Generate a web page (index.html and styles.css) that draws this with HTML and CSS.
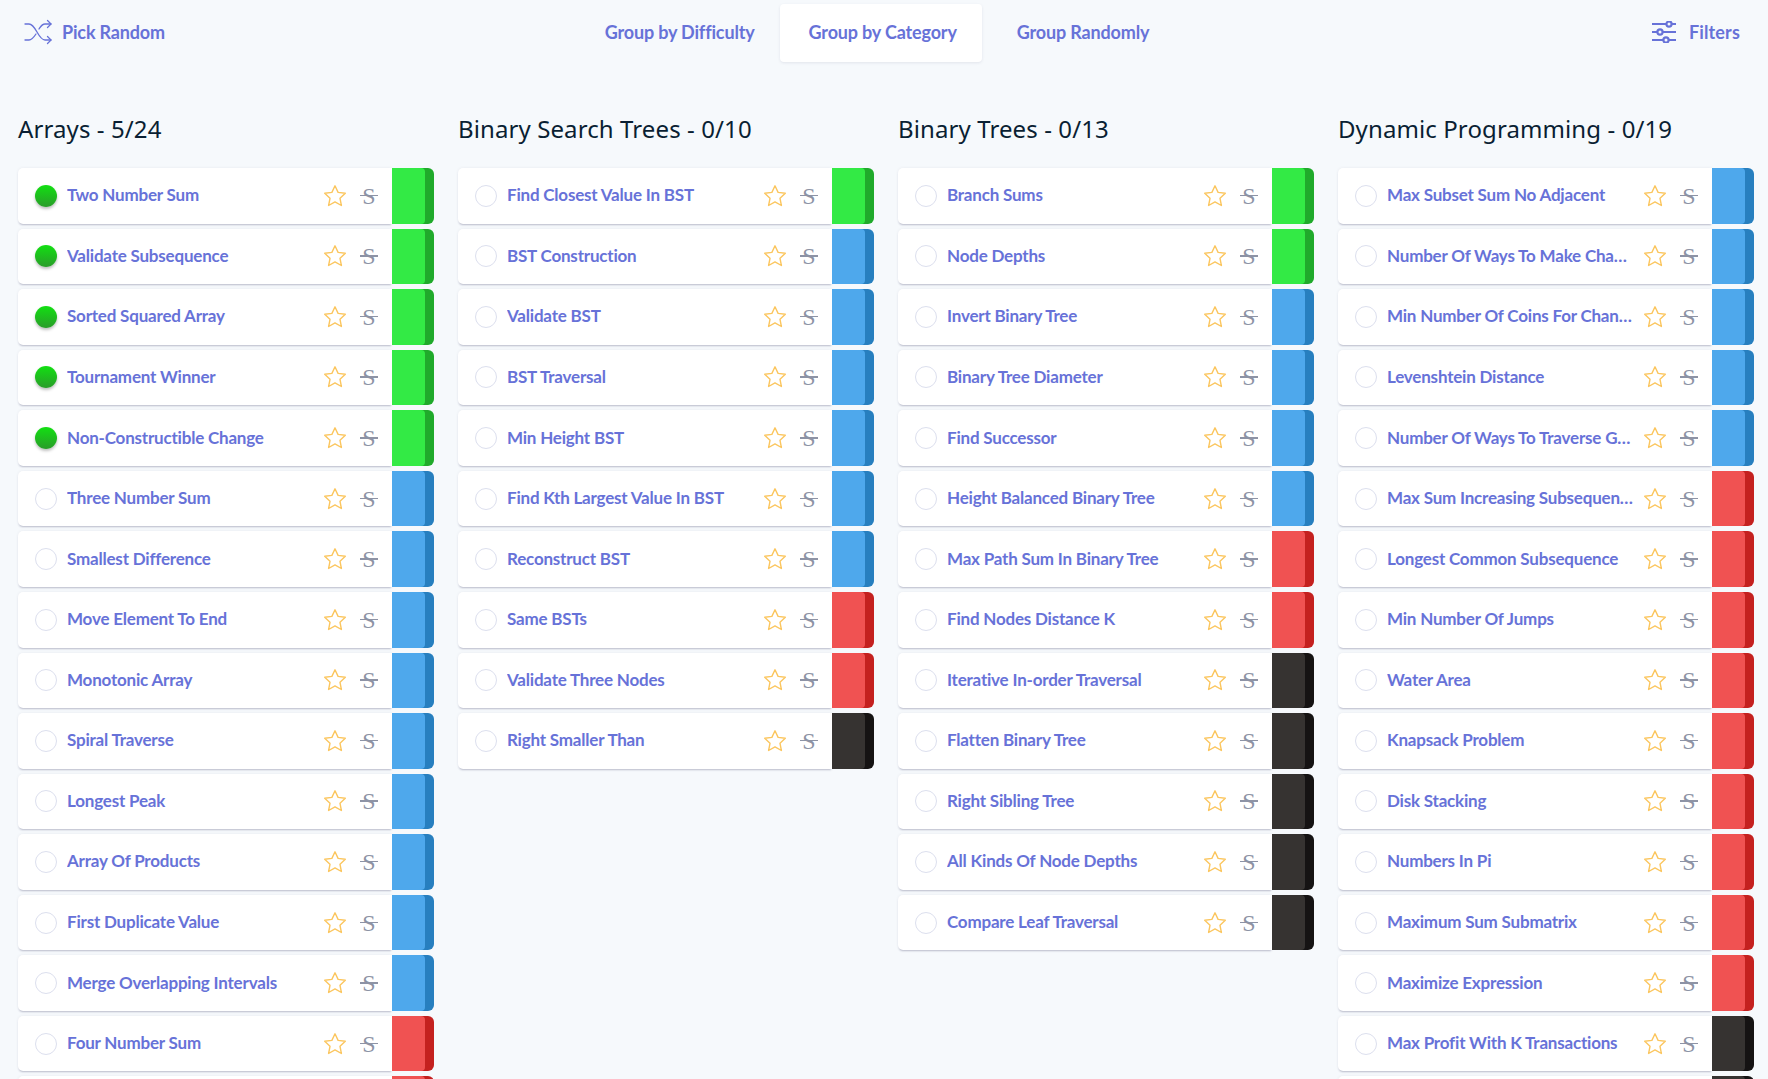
FILE: index.html
```html
<!DOCTYPE html>
<html lang="en">
<head>
    <meta charset="UTF-8">
    <meta name="viewport" content="width=device-width, initial-scale=1.0">
    <title>Questions</title>
    <link rel="stylesheet" href="styles.css">
</head>
<body>
    <svg class="icon-defs" width="0" height="0">
        <symbol id="star" viewBox="0 0 24 24">
            <path d="M12 1.800l3.100 6.600 7.200.9-5.300 5 1.400 7.200-6.400-3.600-6.400 3.600 1.400-7.200-5.300-5 7.200-.9z" fill="none" stroke="#fbc65f" stroke-width="1.400" stroke-linejoin="round"/>
        </symbol>
    </svg>

    <nav class="topbar">
        <a class="nav-link pick-random">
            <svg viewBox="0 0 28 26" width="28" height="26" fill="none" stroke="#6772d8" stroke-width="1.300" stroke-linecap="round" stroke-linejoin="round">
                <path d="M1 5h4c7 0 9 16 16 16h6"/>
                <path d="M1 21h4c3 0 5-3 7-6M15 10c2-3 3-5 6-5h6"/>
                <path d="M23.500 1.500L27 5l-3.500 3.500M23.500 17.500L27 21l-3.500 3.500"/>
            </svg>
            Pick Random
        </a>
        <div class="tabs">
            <a class="tab tab-first">Group by Difficulty</a>
            <a class="tab tab-active">Group by Category</a>
            <a class="tab tab-last">Group Randomly</a>
        </div>
        <a class="nav-link filters">
            <svg viewBox="0 0 24 22" width="24" height="22" fill="none" stroke="#6772d8" stroke-width="2.200">
                <path d="M0 3h14M20 3h4M0 11h5M11 11h13M0 19h11M17 19h7"/>
                <circle cx="17" cy="3" r="2.600"/><circle cx="8" cy="11" r="2.600"/><circle cx="14" cy="19" r="2.600"/>
            </svg>
            Filters
        </a>
    </nav>

    <main class="board" id="board"></main>

    <script>
        const columns = [
            { title: 'Arrays - 5/24', done: 5, rows: [
                ['Two Number Sum', 'g'], ['Validate Subsequence', 'g'], ['Sorted Squared Array', 'g'], ['Tournament Winner', 'g'],
                ['Non-Constructible Change', 'g'], ['Three Number Sum', 'b'], ['Smallest Difference', 'b'], ['Move Element To End', 'b'],
                ['Monotonic Array', 'b'], ['Spiral Traverse', 'b'], ['Longest Peak', 'b'], ['Array Of Products', 'b'],
                ['First Duplicate Value', 'b'], ['Merge Overlapping Intervals', 'b'], ['Four Number Sum', 'r'], ['Subarray Sort', 'r']
            ] },
            { title: 'Binary Search Trees - 0/10', done: 0, rows: [
                ['Find Closest Value In BST', 'g'], ['BST Construction', 'b'], ['Validate BST', 'b'], ['BST Traversal', 'b'],
                ['Min Height BST', 'b'], ['Find Kth Largest Value In BST', 'b'], ['Reconstruct BST', 'b'], ['Same BSTs', 'r'],
                ['Validate Three Nodes', 'r'], ['Right Smaller Than', 'k']
            ] },
            { title: 'Binary Trees - 0/13', done: 0, rows: [
                ['Branch Sums', 'g'], ['Node Depths', 'g'], ['Invert Binary Tree', 'b'], ['Binary Tree Diameter', 'b'],
                ['Find Successor', 'b'], ['Height Balanced Binary Tree', 'b'], ['Max Path Sum In Binary Tree', 'r'], ['Find Nodes Distance K', 'r'],
                ['Iterative In-order Traversal', 'k'], ['Flatten Binary Tree', 'k'], ['Right Sibling Tree', 'k'], ['All Kinds Of Node Depths', 'k'],
                ['Compare Leaf Traversal', 'k']
            ] },
            { title: 'Dynamic Programming - 0/19', done: 0, rows: [
                ['Max Subset Sum No Adjacent', 'b'], ['Number Of Ways To Make Change', 'b'], ['Min Number Of Coins For Change', 'b'], ['Levenshtein Distance', 'b'],
                ['Number Of Ways To Traverse Graph', 'b'], ['Max Sum Increasing Subsequence', 'r'], ['Longest Common Subsequence', 'r'], ['Min Number Of Jumps', 'r'],
                ['Water Area', 'r'], ['Knapsack Problem', 'r'], ['Disk Stacking', 'r'], ['Numbers In Pi', 'r'],
                ['Maximum Sum Submatrix', 'r'], ['Maximize Expression', 'r'], ['Max Profit With K Transactions', 'k'], ['Palindrome Partitioning Min Cuts', 'k']
            ] }
        ];

        const board = document.getElementById('board');

        columns.forEach(column => {
            const section = document.createElement('section');
            section.classList.add('column');
            const rows = column.rows.map((row, i) => `
                <div class="question">
                    <div class="question-body">
                        <span class="check ${i < column.done ? 'check-done' : ''}"></span>
                        <span class="question-name">${row[0]}</span>
                        <svg class="star"><use href="#star"/></svg>
                        <span class="strike">S</span>
                    </div>
                    <span class="level level-${row[1]}"></span>
                </div>`).join('');
            section.innerHTML = `<h2 class="column-title">${column.title}</h2>${rows}`;
            board.appendChild(section);
        });
    </script>
</body>
</html>
```

FILE: styles.css
```css
html, body {
    height: 100%;
    overflow: hidden;
}

body {
    margin: 0;
    background-color: #f6f9fc;
    font-family: 'Lato', sans-serif;
    color: #6772d8;
}

.icon-defs {
    position: absolute;
}

.topbar {
    display: grid;
    grid-template-columns: 1fr auto 1fr;
    align-items: start;
    padding: 4px 28px 0 24px;
    height: 58px;
}

.nav-link {
    display: flex;
    align-items: center;
    gap: 10px;
    height: 55px;
    font-size: 18px;
    font-weight: 700;
    letter-spacing: -0.16px;
}

.filters {
    justify-content: flex-end;
    gap: 13px;
    letter-spacing: 0.15px;
}

.tabs {
    display: flex;
    margin-right: 10px;
}

.tab {
    padding: 0 27px;
    height: 58px;
    line-height: 56px;
    font-size: 18px;
    font-weight: 700;
    letter-spacing: -0.16px;
    border-radius: 4px;
}

.tab-first {
    padding-right: 25px;
}

.tab-active {
    padding: 0 25px 0 29px;
    background-color: #fff;
    box-shadow: 0 1px 3px rgba(50, 50, 93, 0.1);
}

.tab-last {
    margin-left: 8px;
}

.board {
    display: grid;
    grid-template-columns: repeat(4, 416px);
    gap: 24px;
    padding: 49px 14px 0 18px;
}

.column-title {
    margin: 0 0 21px;
    height: 36px;
    line-height: 36px;
    font-family: 'Noto Sans', sans-serif;
    font-size: 24px;
    font-weight: 400;
    letter-spacing: 0.1px;
    color: #0a1f33;
}

.question {
    display: flex;
    height: 55.57px;
    margin-bottom: 5px;
}

.question-body {
    flex: 1;
    min-width: 0;
    display: flex;
    align-items: center;
    padding-left: 17px;
    background-color: #fff;
    border-radius: 5px 0 0 5px;
    box-shadow: 0 2px 2px -1px rgba(50, 50, 93, 0.28), 0 0 3px rgba(50, 50, 93, 0.08);
}

.check {
    flex: none;
    width: 22px;
    height: 22px;
    margin-right: 10px;
    border: 1px solid #dcdfee;
    border-radius: 50%;
    box-sizing: border-box;
}

.check-done {
    border: 0;
    background: linear-gradient(#12e012, #2a9c2a);
    box-shadow: 0 2px 3px rgba(0, 0, 0, 0.25);
}

.question-name {
    flex: 1;
    min-width: 0;
    margin-top: -2px;
    font-size: 17px;
    font-weight: 700;
    letter-spacing: -0.2px;
    white-space: nowrap;
    overflow: hidden;
    text-overflow: ellipsis;
}

.star {
    flex: none;
    width: 24px;
    height: 24px;
    margin-left: 9px;
}

/* the little strikethrough mark next to the star */
.strike {
    flex: none;
    position: relative;
    width: 18px;
    margin-left: 13px;
    margin-right: 14px;
    font-family: 'Liberation Serif', serif;
    font-size: 24px;
    line-height: 20px;
    text-align: center;
    color: #8d93a5;
}

.strike::after {
    content: '';
    position: absolute;
    left: 0;
    right: 0;
    top: 9px;
    height: 1.5px;
    background-color: #8d93a5;
}

.level {
    flex: none;
    width: 42px;
    border-radius: 0 6px 6px 0;
}

.level::before {
    content: '';
    display: block;
    width: 33px;
    height: 100%;
    border-radius: 0 4px 4px 0;
}

.level-g {
    background-color: #20aa2b;
}

.level-g::before {
    background-color: #33ea45;
}

.level-b {
    background-color: #277fbf;
}

.level-b::before {
    background-color: #4ea8ec;
}

.level-r {
    background-color: #c4211f;
}

.level-r::before {
    background-color: #f05252;
}

.level-k {
    background-color: #151313;
}

.level-k::before {
    background-color: #363331;
}
```
